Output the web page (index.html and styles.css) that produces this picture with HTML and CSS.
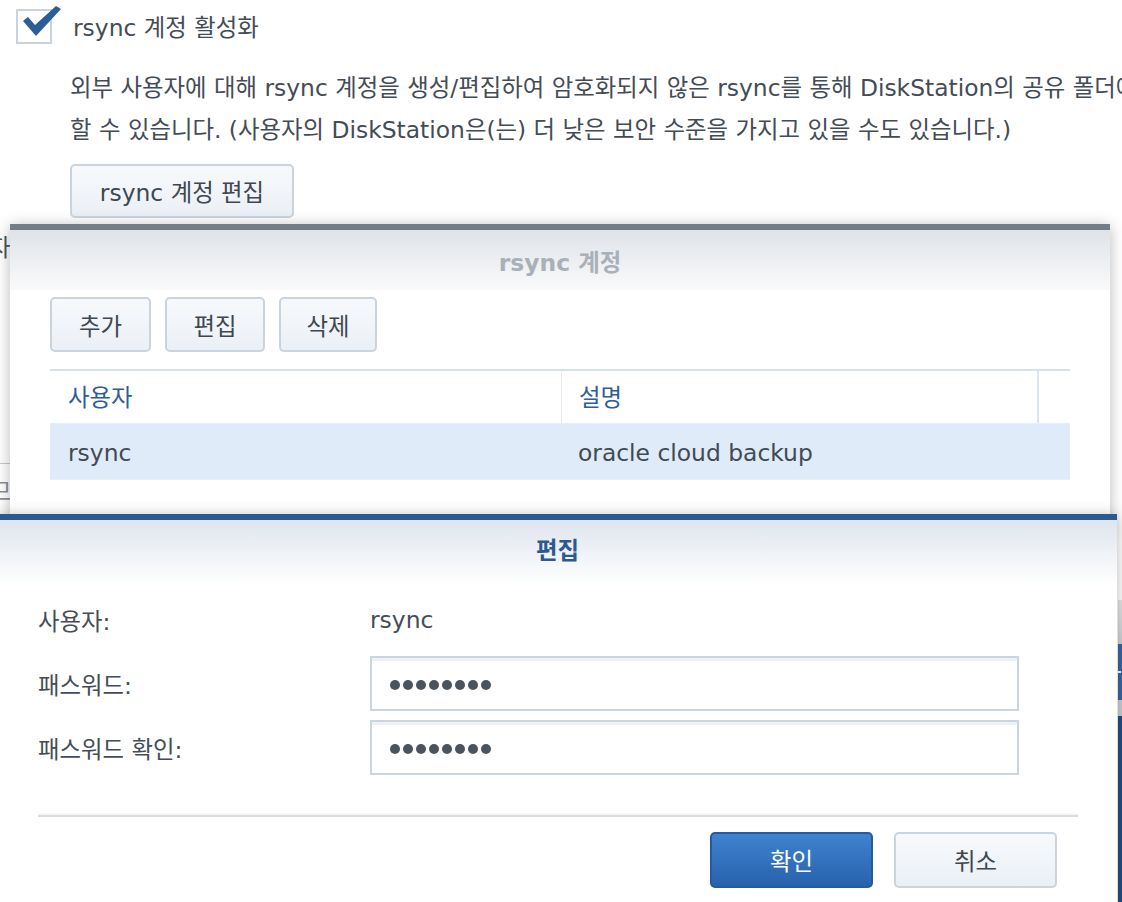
FILE: index.html
```html
<!DOCTYPE html>
<html lang="ko">
<head>
<meta charset="utf-8">
<title>rsync 계정</title>
<link rel="stylesheet" href="styles.css">
</head>
<body>
<div class="page">
  <div class="check-row">
    <span class="checkbox">
      <svg class="checkmark" width="40" height="34" viewBox="0 0 40 34"><path d="M1 15 L6 11 L13 19 L34 0 L39 3 L14 30 Z" fill="#2d5d97"/></svg>
    </span>
    <span class="check-label">rsync 계정 활성화</span>
  </div>
  <p class="desc">외부 사용자에 대해 rsync 계정을 생성/편집하여 암호화되지 않은 rsync를 통해 DiskStation의 공유 폴더에 액세스<br>할 수 있습니다. (사용자의 DiskStation은(는) 더 낮은 보안 수준을 가지고 있을 수도 있습니다.)</p>
  <button class="btn btn-edit">rsync 계정 편집</button>
  <div class="under-text">자동</div>
  <div class="under-line"></div>
  <div class="under-text under-text2">므</div>
</div>

<div class="under-right">
  <div class="ur-gray"></div>
  <div class="ur-light"><span></span></div>
  <div class="ur-bar"></div>
  <div class="ur-dark"></div>
</div>

<div class="dialog dialog-accounts">
  <div class="dlg-head inactive">rsync 계정</div>
  <div class="toolbar">
    <button class="btn btn-tool t-add">추가</button>
    <button class="btn btn-tool t-edit">편집</button>
    <button class="btn btn-tool t-del">삭제</button>
  </div>
  <div class="grid">
    <div class="grid-row grid-head">
      <div class="cell c-user">사용자</div>
      <div class="cell c-desc">설명</div>
      <div class="cell c-end"></div>
    </div>
    <div class="grid-row grid-data">
      <div class="cell c-user">rsync</div>
      <div class="cell c-desc">oracle cloud backup</div>
      <div class="cell c-end"></div>
    </div>
  </div>
</div>

<div class="dialog dialog-edit">
  <div class="dlg-head active">편집</div>
  <div class="form">
    <div class="f-label">사용자:</div>
    <div class="f-value">rsync</div>
    <div class="f-label">패스워드:</div>
    <div class="f-input"><span class="dots"><i></i><i></i><i></i><i></i><i></i><i></i><i></i><i></i></span></div>
    <div class="f-label">패스워드 확인:</div>
    <div class="f-input"><span class="dots"><i></i><i></i><i></i><i></i><i></i><i></i><i></i><i></i></span></div>
  </div>
  <div class="sep"></div>
  <div class="actions">
    <button class="btn btn-primary">확인</button>
    <button class="btn btn-cancel">취소</button>
  </div>
</div>
</body>
</html>
```
FILE: styles.css
```css
html, body {
  margin: 0;
  padding: 0;
}
body {
  width: 1122px;
  height: 902px;
  overflow: hidden;
  position: relative;
  background: #ffffff;
  font-family: "DejaVu Sans", "Noto Sans CJK KR", sans-serif;
  font-size: 23.4px;
  color: #414a53;
}
.page {
  padding: 8px 0 0 16px;
  overflow: hidden;
  height: 894px;
}
.check-row {
  display: flex;
  align-items: center;
  height: 36px;
}
.checkbox {
  position: relative;
  width: 32px;
  height: 31px;
  border: 2px solid #c9d2dd;
  background: #fff;
  flex: none;
}
.checkmark {
  position: absolute;
  left: 4px;
  top: -5px;
}
.check-label {
  margin-left: 21px;
  color: #434c56;
}
.desc {
  margin: 23px 0 0 54px;
  line-height: 42px;
  white-space: nowrap;
  color: #434c56;
}
.btn {
  font-family: "DejaVu Sans", "Noto Sans CJK KR", sans-serif;
  font-size: 23.4px;
  color: #3e4750;
  border: 2px solid #c9d4df;
  border-radius: 5px;
  background: linear-gradient(#f7f9fc, #ebf0f6);
  padding: 0;
}
.btn-edit {
  display: block;
  margin: 13px 0 0 54px;
  width: 224px;
  height: 54px;
}
.under-text {
  margin: 10px 0 0 -27px;
  color: #4b545d;
  line-height: 40px;
}
.under-line {
  margin: 195px 0 0 -16px;
  width: 40px;
  border-top: 1px solid #c3c9cf;
}
.under-text2 {
  margin: 8px 0 0 -26px;
  color: #8a9099;
}

.under-right {
  position: absolute;
  right: 0;
  top: 600px;
  width: 4px;
  display: flex;
  flex-direction: column;
}
.ur-gray { height: 44px; background: linear-gradient(#e6e6e6, #cfd2d6); }
.ur-light { height: 56px; background: #3b66a0; position: relative; }
.ur-light span { position: absolute; left: 0; top: 27px; width: 3px; height: 2px; background: #fff; }
.ur-bar { height: 16px; background: #c9ced5; }
.ur-dark { height: 200px; background: #264c82; }

.dialog {
  position: absolute;
  background: #fff;
  box-shadow: 0 2px 14px rgba(0, 0, 0, 0.28);
}
.dialog-accounts {
  left: 10px;
  top: 224px;
  width: 1100px;
  height: 300px;
  border-top: 6px solid #747c85;
}
.dialog-edit {
  left: -2px;
  top: 514px;
  width: 1119px;
  height: 420px;
  border-top: 6px solid #2b5a8e;
}
.dlg-head {
  text-align: center;
  font-weight: bold;
}
.dlg-head.inactive {
  height: 60px;
  line-height: 66px;
  color: #a9b0b8;
  background: linear-gradient(#dfe3e8, #f9fafb);
}
.dlg-head.active {
  height: 65px;
  line-height: 62px;
  color: #2d5a8e;
  background: linear-gradient(#dee5ee, #ffffff);
}
.toolbar {
  display: flex;
  gap: 14px;
  padding: 7px 40px 0;
}
.btn-tool {
  height: 55px;
}
.t-add { width: 101px; }
.t-edit { width: 100px; }
.t-del { width: 98px; }
.grid {
  margin: 17px 40px 0;
  border-top: 2px solid #d6e1ec;
}
.grid-row {
  display: flex;
}
.grid-head {
  height: 52px;
  color: #2e5d93;
}
.grid-data {
  height: 55px;
  background: #dfebf9;
  border-top: 1px solid #e9eff6;
  border-bottom: 1px solid #e9eff6;
}
.cell {
  display: flex;
  align-items: center;
  padding-left: 18px;
}
.c-user { width: 493px; }
.c-desc { width: 458px; padding-left: 17px; }
.c-end { flex: 1; padding: 0; }
.grid-head .c-desc { border-left: 1px solid #e3eaf2; }
.grid-head .c-end { border-left: 2px solid #dce6f1; }
.grid-head .cell { padding-bottom: 2px; }
.grid-data .cell { padding-top: 2px; }

.form {
  display: grid;
  grid-template-columns: 332px 649px;
  grid-auto-rows: 55px;
  row-gap: 9px;
  padding: 7px 0 0 40px;
}
.f-label, .f-value {
  display: flex;
  align-items: center;
  color: #444d57;
}
.f-input {
  border: 2px solid #cad5e0;
  box-shadow: inset 0 3px 0 #eef1f4;
  display: flex;
  align-items: center;
  padding-left: 18px;
}
.dots {
  display: flex;
  gap: 3px;
  margin-top: 3px;
}
.dots i {
  width: 10px;
  height: 10px;
  border-radius: 50%;
  background: #4b545e;
}
.sep {
  margin: 38px 39px 0 40px;
  height: 4px;
  background: linear-gradient(#fbfbfb, #eeeeee 60%, #dcdcdc 60%);
}
.actions {
  display: flex;
  justify-content: flex-end;
  gap: 21px;
  padding: 15px 60px 0 0;
}
.btn-primary, .btn-cancel {
  width: 163px;
  height: 56px;
}
.btn-primary {
  color: #ffffff;
  border-color: #2759a0;
  background: linear-gradient(#3e82d0, #2862ad);
}
.btn-cancel {
  color: #3e4750;
}
```
